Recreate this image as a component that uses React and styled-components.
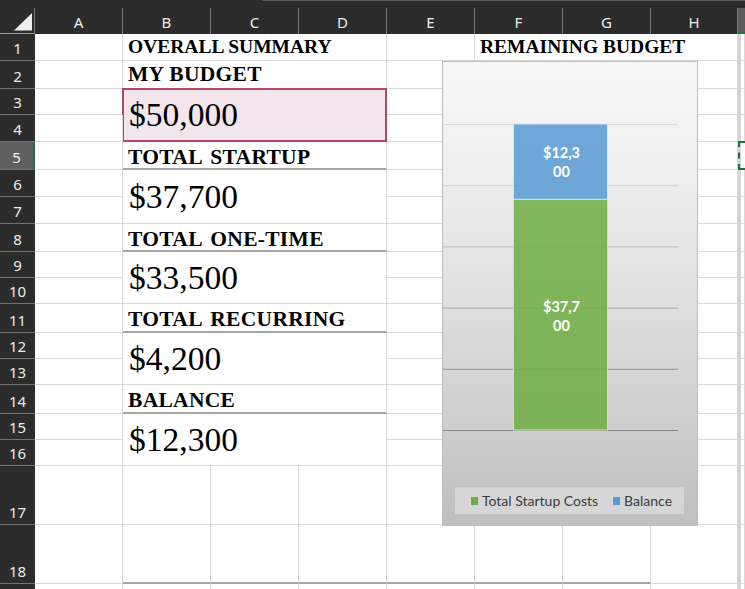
import React from 'react';
import styled, { createGlobalStyle, css } from 'styled-components';

const GlobalStyle = createGlobalStyle`
  html, body { margin: 0; padding: 0; background: #fff; }
  body { width: 745px; height: 589px; overflow: hidden; }
  #root { width: 745px; height: 589px; }
  * { box-sizing: border-box; }
`;

const DARK = '#2c2c2c';
const GRID = '#dadada';
const RULE = '#a6a6a6';
const GREEN = '#1e7145';

const rowHeights = [27, 28, 26, 27, 28, 27, 27, 28, 26, 26, 29, 26, 26, 29, 26, 26, 59, 59, 59];

const Page = styled.div`
  position: relative;
  width: 745px;
  height: 589px;
  overflow: hidden;
  background: #fff;
`;

const TopStrip = styled.div`
  height: 8px;
  background: ${DARK};
  display: flex;
`;

const TopStripEdge = styled.div`
  margin-left: 262px;
  flex: 1;
  border-top: 1px solid #5a5a5a;
`;

const Sheet = styled.div`
  display: grid;
  grid-template-columns: 35px repeat(7, 88px) 87px 3px 1fr;
  grid-template-rows: 26px ${rowHeights.map((h) => h + 'px').join(' ')};
`;

const Corner = styled.div`
  grid-column: 1;
  grid-row: 1;
  background: ${DARK};
  border-right: 1px solid #7a7a7a;
  border-bottom: 1px solid #9a9a9a;
  svg { display: block; }
`;

const ColHeader = styled.div`
  grid-row: 1;
  grid-column: ${(p) => p.$col} / span ${(p) => p.$span || 1};
  background: ${(p) => (p.$selected ? '#5c5c5c' : DARK)};
  border-right: ${(p) => (p.$selected ? 'none' : '1px solid #767676')};
  border-bottom: ${(p) => (p.$selected ? `2px solid ${GREEN}` : 'none')};
  color: #ececec;
  font-family: "Noto Sans", "Open Sans", sans-serif;
  font-size: 15px;
  display: flex;
  align-items: center;
  justify-content: center;
  padding-top: 2px;
`;

const RowHeader = styled.div`
  grid-column: 1;
  grid-row: ${(p) => p.$row};
  background: ${(p) => (p.$selected ? '#5f5f5f' : DARK)};
  border-bottom: 1px solid #737373;
  border-right: ${(p) => (p.$selected ? `2px solid ${GREEN}` : 'none')};
  color: #ececec;
  font-family: "Noto Sans", "Open Sans", sans-serif;
  font-size: 15px;
  line-height: 20px;
  display: flex;
  align-items: flex-end;
  justify-content: center;
  padding-bottom: 2px;
`;

const Cell = styled.div`
  grid-column: ${(p) => p.$col} / span ${(p) => p.$span || 1};
  grid-row: ${(p) => p.$row} / span ${(p) => p.$rowSpan || 1};
  border-right: 1px solid ${GRID};
  border-bottom: ${(p) => (p.$rule ? `2px solid ${RULE}` : `1px solid ${GRID}`)};
  min-width: 0;
  min-height: 0;
  font-family: "Liberation Serif", "Times New Roman", serif;
  color: #000;
  display: flex;
  align-items: center;
  white-space: nowrap;
  overflow: visible;
`;

const TitleCell = styled(Cell)`
  font-weight: bold;
  font-size: 19.5px;
  padding-left: 5px;
`;

const LabelCell = styled(Cell)`
  font-weight: bold;
  font-size: 21.5px;
  letter-spacing: 0.3px;
  word-spacing: ${(p) => (p.$rule ? '3px' : '0')};
  padding-left: 5px;
  padding-top: ${(p) => (p.$rule ? '4px' : '0')};
`;

const ValueCell = styled(Cell)`
  font-size: 33.5px;
  padding-left: 6px;
  ${(p) =>
    p.$boxed &&
    css`
      background: #f2e6ec;
      border: 2px solid #b5446e;
      margin-left: -1px;
      margin-top: -1px;
      padding-left: 5px;
    `}
`;

const MarqueeCell = styled(Cell)`
  border: 2px dashed ${GREEN};
  border-right: none;
  margin-left: -3px;
  margin-top: -1px;
`;

const Divider = styled.div`
  grid-column: 10;
  grid-row: 2 / -1;
  background: #d4d4d4;
`;

/* ---------- chart ---------- */

const Chart = styled.div`
  position: absolute;
  left: 442px;
  top: 61px;
  width: 256px;
  height: 465px;
  border: 1px solid #bdbdbd;
  background: linear-gradient(
    to bottom,
    #f7f7f7 0%,
    #efefef 22%,
    #e0e0e0 50%,
    #cecece 78%,
    #bfbfbf 100%
  );
  display: flex;
  flex-direction: column;
`;

const Plot = styled.svg`
  display: block;
  flex: none;
`;

const Legend = styled.div`
  margin: 0 13px 0 12px;
  height: 27px;
  background: #d6d6d6;
  display: flex;
  align-items: center;
  justify-content: center;
  gap: 15px;
  padding-left: 4px;
  font-family: Lato, "Open Sans", sans-serif;
  font-size: 14px;
  color: #3c3c3c;
`;

const LegendItem = styled.div`
  display: flex;
  align-items: center;
  gap: 4px;
`;

const Swatch = styled.span`
  width: 7px;
  height: 8px;
  background: ${(p) => p.$color};
`;

const blocks = [
  { row: 2, kind: 'label', text: 'MY BUDGET' },
  { row: 3, kind: 'value', text: '$50,000', boxed: true },
  { row: 5, kind: 'label', text: 'TOTAL STARTUP', rule: true },
  { row: 6, kind: 'value', text: '$37,700' },
  { row: 8, kind: 'label', text: 'TOTAL ONE-TIME', rule: true },
  { row: 9, kind: 'value', text: '$33,500' },
  { row: 11, kind: 'label', text: 'TOTAL RECURRING', rule: true },
  { row: 12, kind: 'value', text: '$4,200' },
  { row: 14, kind: 'label', text: 'BALANCE', rule: true },
  { row: 15, kind: 'value', text: '$12,300' },
];

const gridYs = [62, 123.2, 184.4, 245.6, 306.8, 368];
const gridColors = ['#d9d9d9', '#cfcfcf', '#bdbdbd', '#a6a6a6', '#929292', '#878787'];

function RemainingChart() {
  const barX = 70.5;
  const barW = 94;
  const top = 62;
  const bottom = 368;
  const scale = (bottom - top) / 50000;
  const split = bottom - 37700 * scale;
  const cx = barX + barW / 2 + 1;
  return (
    <Chart>
      <Plot width="254" height="425" viewBox="0 0 254 425">
        {gridYs.map((y, i) => (
          <line key={i} x1="0" x2="235" y1={y + 0.5} y2={y + 0.5} stroke={gridColors[i]} strokeWidth="1" />
        ))}
        <rect x={barX} y={split} width={barW} height={bottom - split} fill="#70ad47" fillOpacity="0.87" stroke="#cde2bf" strokeWidth="1" />
        <rect x={barX} y={top} width={barW} height={split - top} fill="#5b9bd5" fillOpacity="0.87" stroke="#d3e4f4" strokeWidth="1" />
        <g fill="#ffffff" fontFamily="Lato, 'Open Sans', sans-serif" fontWeight="bold" fontSize="14.5" textAnchor="middle">
          <text x={cx} y="96">$12,3</text>
          <text x={cx} y="115">00</text>
          <text x={cx} y="250">$37,7</text>
          <text x={cx} y="269">00</text>
        </g>
      </Plot>
      <Legend>
        <LegendItem>
          <Swatch $color="#70ad47" />
          <span>Total Startup Costs</span>
        </LegendItem>
        <LegendItem>
          <Swatch $color="#5b9bd5" />
          <span>Balance</span>
        </LegendItem>
      </Legend>
    </Chart>
  );
}

export default function App() {
  const letters = ['A', 'B', 'C', 'D', 'E', 'F', 'G', 'H'];
  const cells = [];

  rowHeights.forEach((_, i) => {
    const n = i + 1;
    const r = n + 1;
    const visibleNumber = n <= 18;
    cells.push(
      <RowHeader key={'rh' + n} $row={r} $selected={n === 5}>
        {visibleNumber ? n : null}
      </RowHeader>
    );
    // column A
    cells.push(<Cell key={'a' + n} $col={2} $row={r} />);

    // columns B-D
    if (n === 1) {
      cells.push(
        <TitleCell key="title1" $col={3} $span={3} $row={r}>
          OVERALL SUMMARY
        </TitleCell>
      );
    } else if (n >= 17) {
      [3, 4, 5].forEach((c) =>
        cells.push(<Cell key={'bd' + n + c} $col={c} $row={r} $rule={n === 18} />)
      );
    } else {
      const b = blocks.find((x) => x.row === n);
      if (b && b.kind === 'label') {
        cells.push(
          <LabelCell key={'lab' + n} $col={3} $span={3} $row={r} $rule={b.rule}>
            {b.text}
          </LabelCell>
        );
      } else if (b && b.kind === 'value') {
        cells.push(
          <ValueCell key={'val' + n} $col={3} $span={3} $row={r} $rowSpan={2} $boxed={b.boxed}>
            {b.text}
          </ValueCell>
        );
      }
    }

    // columns E-H
    if (n === 1) {
      cells.push(<Cell key="e1" $col={6} $row={r} />);
      cells.push(
        <TitleCell key="title2" $col={7} $span={3} $row={r}>
          REMAINING BUDGET
        </TitleCell>
      );
    } else {
      [6, 7, 8, 9].forEach((c) =>
        cells.push(<Cell key={'eh' + n + c} $col={c} $row={r} $rule={n === 18 && c <= 8} />)
      );
    }

    // column I (past the split)
    if (n === 5) {
      cells.push(<MarqueeCell key={'i' + n} $col={11} $row={r} />);
    } else {
      cells.push(<Cell key={'i' + n} $col={11} $row={r} />);
    }
  });

  return (
    <>
      <GlobalStyle />
      <Page>
        <TopStrip>
          <TopStripEdge />
        </TopStrip>
        <Sheet>
          <Corner>
            <svg width="34" height="25" viewBox="0 0 34 25">
              <polygon points="14,22.5 32,22.5 32,5" fill="#efefef" />
            </svg>
          </Corner>
          {letters.map((l, i) => (
            <ColHeader key={l} $col={i + 2}>
              {l}
            </ColHeader>
          ))}
          <ColHeader $col={10} $span={2} $selected />
          <Divider />
          {cells}
        </Sheet>
        <RemainingChart />
      </Page>
    </>
  );
}
